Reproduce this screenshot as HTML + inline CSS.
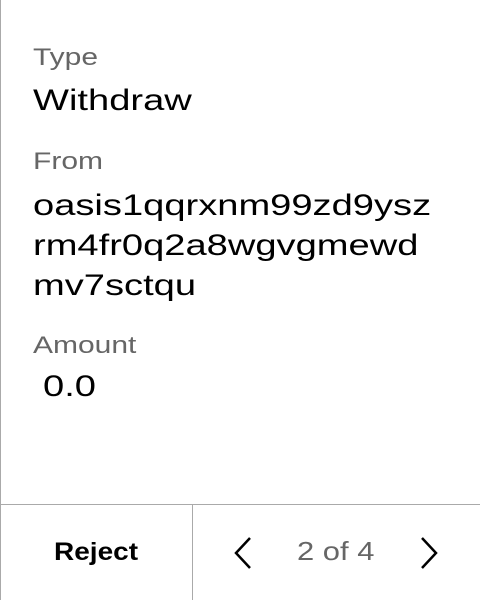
<!DOCTYPE html>
<html><head><style>
body{margin:0;width:480px;height:600px;background:#fff;font-family:"Liberation Sans",sans-serif;position:relative;overflow:hidden}
.l{position:absolute;left:0;top:0;width:1px;height:600px;background:#aaa}
.h{position:absolute;left:0;top:504px;width:480px;height:1px;background:#aaa}
.v{position:absolute;left:192px;top:504px;width:1px;height:96px;background:#aaa}
.t{position:absolute;left:33px;white-space:nowrap;transform-origin:0 0}
.lab{font-size:24px;color:#666;line-height:30px;transform:scaleX(1.25)}
.val{font-size:30px;color:#000;line-height:40px;transform:scaleX(1.27)}
</style></head><body>
<div class="l"></div><div class="h"></div><div class="v"></div>
<div class="t lab" style="top:43px">Type</div>
<div class="t val" style="top:81px">Withdraw</div>
<div class="t lab" style="top:147px">From</div>
<div class="t val" style="top:186px">oasis1qqrxnm99zd9ysz<br>rm4fr0q2a8wgvgmewd<br>mv7sctqu</div>
<div class="t lab" style="top:331px">Amount</div>
<div class="t val" style="top:367px;left:43px">0.0</div>
<div style="position:absolute;left:54px;top:536px;font-weight:bold;font-size:25px;line-height:32px;transform:scaleX(1.12);transform-origin:0 0">Reject</div>
<svg style="position:absolute;left:232px;top:536px" width="22" height="34"><path d="M18 2 L4 17 L18 32" stroke="#000" stroke-width="2.5" fill="none"/></svg>
<div style="position:absolute;left:297px;top:535px;font-size:26px;color:#666;line-height:32px;transform:scaleX(1.19);transform-origin:0 0">2 of 4</div>
<svg style="position:absolute;left:418px;top:536px" width="22" height="34"><path d="M4 2 L18 17 L4 32" stroke="#000" stroke-width="2.5" fill="none"/></svg>
</body></html>
